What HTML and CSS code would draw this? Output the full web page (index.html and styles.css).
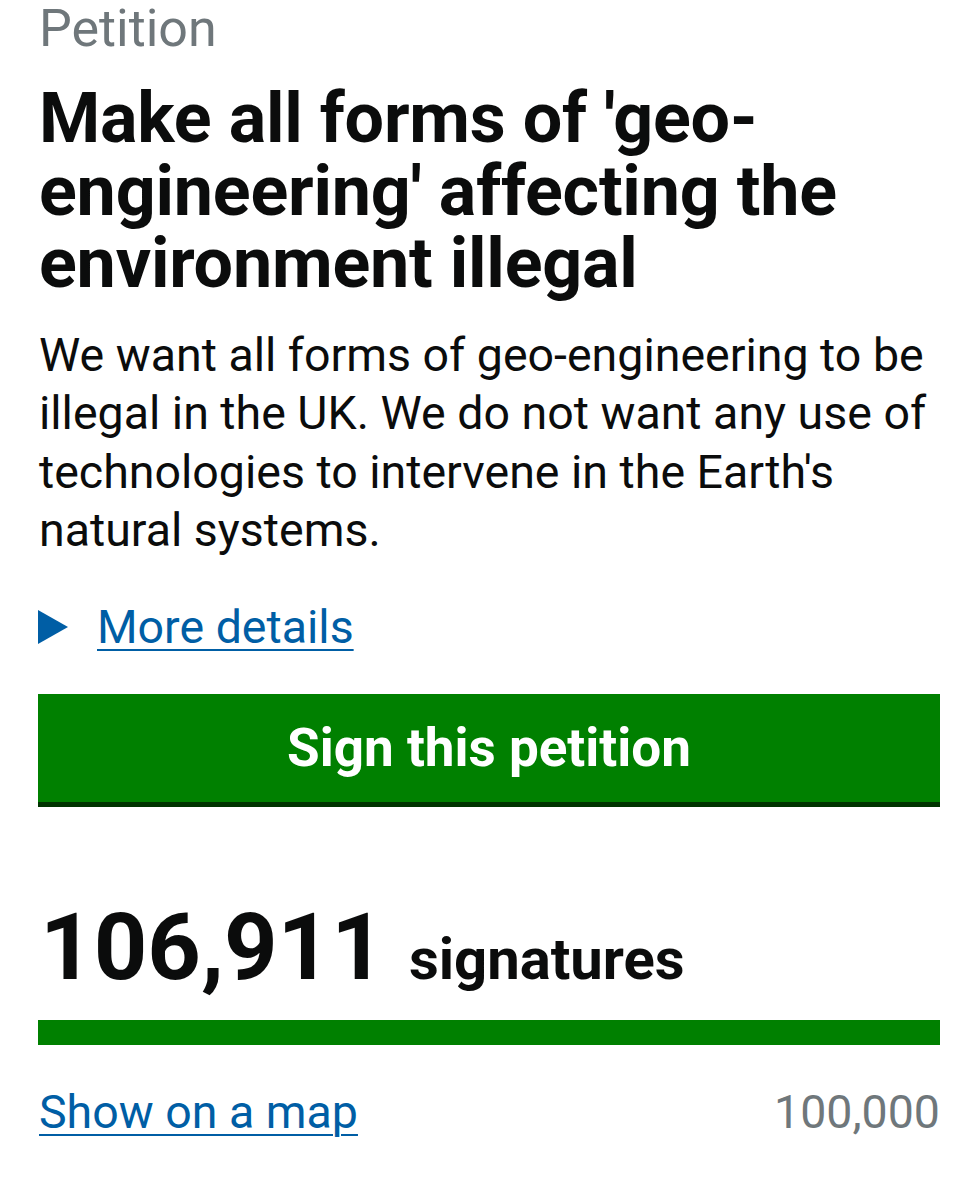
FILE: index.html
```html
<!DOCTYPE html>
<html lang="en">
<head>
<meta charset="utf-8">
<title>Petition</title>
<link rel="stylesheet" href="styles.css">
</head>
<body>
<main class="page">
  <span class="caption">Petition</span>
  <h1 class="title">Make all forms of 'geo-engineering' affecting the environment illegal</h1>
  <p class="summary">We want all forms of geo-engineering to be illegal in the UK. We do not want any use of technologies to intervene in the Earth's natural systems.</p>
  <div class="details">
    <svg class="details-arrow" width="30" height="34" viewBox="0 0 30 34" aria-hidden="true"><polygon points="0,0 30,17 0,34" fill="#005ea5"/></svg>
    <a class="link" href="#">More details</a>
  </div>
  <a class="button" href="#">Sign this petition</a>
  <p class="count"><span class="count-number">106,911</span><span class="count-label">signatures</span></p>
  <div class="progress"><div class="progress-fill" style="width:100%"></div></div>
  <div class="meta">
    <a class="link" href="#">Show on a map</a>
    <span class="target">100,000</span>
  </div>
</main>
</body>
</html>
```

FILE: styles.css
```css
html, body {
  margin: 0;
  padding: 0;
  background: #ffffff;
}

body {
  font-family: Roboto, "Liberation Sans", Arial, sans-serif;
  color: #0b0c0c;
}

.page {
  width: 902px;
  padding: 2px 0 0 38px;
  display: flex;
  flex-direction: column;
}

.caption {
  display: block;
  font-size: 52px;
  line-height: 54px;
  color: #6f777b;
  padding-left: 1px;
}

.title {
  margin: 26px 0 0;
  font-size: 70px;
  line-height: 72.5px;
  font-weight: 700;
  padding-left: 1px;
  letter-spacing: -0.2px;
}

.summary {
  margin: 26px 0 0;
  font-size: 46.5px;
  line-height: 58.5px;
  padding-left: 1px;
}

.details {
  margin-top: 38px;
  display: flex;
  align-items: center;
  gap: 29px;
  font-size: 46.5px;
  line-height: 58px;
}

.details-arrow {
  display: block;
  flex: none;
}

.link {
  color: #005ea5;
  text-decoration: underline;
  text-decoration-thickness: 2px;
  text-underline-offset: 6px;
}

.button {
  margin-top: 38px;
  display: flex;
  align-items: center;
  justify-content: center;
  height: 108px;
  background: #008000;
  border-bottom: 5px solid #003300;
  color: #ffffff;
  font-size: 53px;
  font-weight: 700;
  text-decoration: none;
}

.count {
  margin: 90px 0 0;
  display: flex;
  align-items: baseline;
  font-weight: 700;
  line-height: 100px;
  padding-left: 2px;
}

.count-number {
  font-size: 93.5px;
}

.count-label {
  font-size: 58px;
  line-height: 1;
  margin-left: 24px;
}

.progress {
  margin-top: 23px;
  height: 25px;
  background: #dee0e2;
}

.progress-fill {
  height: 100%;
  background: #008000;
}

.meta {
  margin-top: 38px;
  display: flex;
  justify-content: space-between;
  align-items: baseline;
  font-size: 46.5px;
  line-height: 58px;
  padding-left: 1px;
}

.target {
  color: #6f777b;
}
```
